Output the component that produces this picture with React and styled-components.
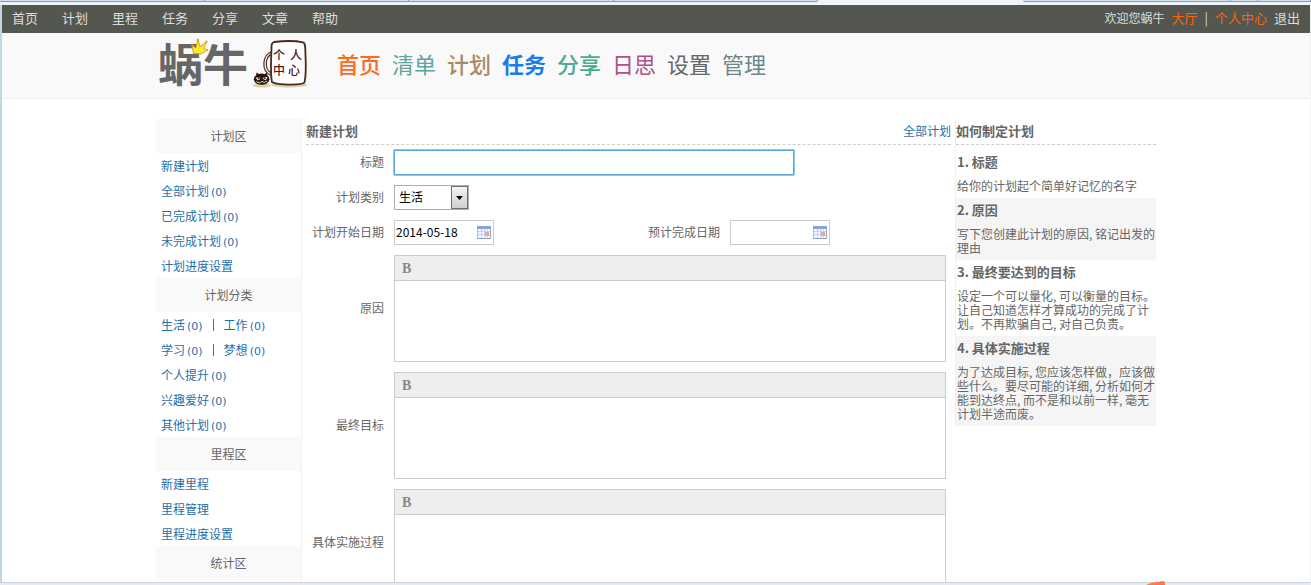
import styled, {createGlobalStyle} from "styled-components";

const GlobalStyle = createGlobalStyle`
    *, *::before, *::after {
        box-sizing: border-box;
    }

    body {
        margin: 0;
        overflow: hidden;
        color: #666;
        font: 12px/14px "Noto Sans CJK SC", sans-serif;
    }

    ul, ol, h2, h3, p {
        margin: 0;
        padding: 0;
        list-style: none;
        font-weight: normal;
    }

    a {
        color: inherit;
        text-decoration: none;
    }

    button, input, select, textarea {
        margin: 0;
        font: inherit;
        border-radius: 0;
    }
`;

/* ---------- window frame ---------- */

const Window = styled.div`
    height: 100vh;
    display: flex;
    flex-direction: column;
    background: #edf3f8;
`;

const TabStrip = styled.div`
    flex: none;
    height: 5px;
    display: flex;
    justify-content: space-between;
`;

const TabGroup = styled.div`
    display: flex;
    height: 2px;
    width: ${props => props.$width};
    border-bottom: 1px solid #7f9fb8;
    border-radius: ${props => props.$radius};
    background: #d3e2ed;
`;

const Tab = styled.div`
    flex: ${props => props.$grow || 1};
    border-right: 1px solid #7f9fb8;
`;

const Viewport = styled.div`
    flex: 1;
    min-height: 0;
    overflow: hidden;
    display: flex;
    flex-direction: column;
    margin: 0 1px 0 0;
    border-left: 2px solid #c3d5e0;
    background: #fff;
`;

const StatusEdge = styled.div`
    flex: none;
    position: relative;
    height: 3px;
    border-top: 1px solid #c8d2d9;
    background: #e6ebf3;
`;

const Ribbon = styled.svg`
    position: absolute;
    right: 145px;
    bottom: 0;
`;

/* ---------- top bar ---------- */

const TopBar = styled.div`
    flex: none;
    height: 28px;
    display: flex;
    align-items: center;
    justify-content: space-between;
    padding: 0 10px 2px;
    background: #545650;
    color: #ddd;
    font-size: 13px;
`;

const TopLinks = styled.nav`
    display: flex;
    gap: 24px;
`;

const UserLinks = styled.div`
    display: flex;
    align-items: center;
    gap: 7px;
`;

const Welcome = styled.span`
    font-size: 12px;
`;

const HotLink = styled.a`
    color: #f60;
`;

/* ---------- header ---------- */

const Header = styled.header`
    flex: none;
    height: 66px;
    background: #f9f9f9;
    border-bottom: 1px solid #f3f3f3;
`;

const Container = styled.div`
    width: 100%;
    max-width: 1000px;
    margin: 0 auto;
`;

const HeaderInner = styled(Container)`
    height: 60px;
    display: flex;
    align-items: center;
`;

const Logo = styled.a`
    position: relative;
    width: 96px;
    padding-left: 2px;
    color: #666;
    font-size: 45px;
    font-weight: 700;
    line-height: 60px;
    white-space: nowrap;
`;

const Crown = styled.svg`
    position: absolute;
    left: 35px;
    top: 5px;
`;

const MainNav = styled.nav`
    display: flex;
    gap: 11px;
    margin-left: 29px;
    font-size: 22px;
    line-height: 32px;
`;

const NavLink = styled.a`
    color: ${props => props.$color};
    font-weight: ${props => props.$weight || 400};
`;

/* ---------- columns ---------- */

const Columns = styled(Container)`
    flex: 1;
    display: flex;
    align-items: stretch;
    padding-top: 20px;
`;

const Sidebar = styled.aside`
    flex: none;
    width: 146px;
    border-right: 1px solid #eeeef8;
`;

const SideTitle = styled.h2`
    font-size: 12px;
    line-height: 34px;
    text-align: center;
    background: #f9f9f9;
`;

const SideRow = styled.li`
    display: flex;
    align-items: center;
    height: 25px;
    padding-left: 5px;
    color: #1f6fa8;
`;

const Count = styled.span`
    font-family: "DejaVu Sans", sans-serif;
    font-size: 11px;
    line-height: 0;
    padding-left: 2px;
`;

const Divider = styled.span`
    width: 1px;
    height: 12px;
    margin: 0 10px;
    background: #666;
`;

const Main = styled.main`
    flex: 1;
    min-width: 0;
    padding: 0 4px;
`;

const SectionHead = styled.div`
    display: flex;
    justify-content: space-between;
    height: 26px;
    margin-bottom: 5px;
    border-bottom: 1px dashed #ccc;
    line-height: 24px;
`;

const SectionTitle = styled.h2`
    font-size: 13px;
    font-weight: 700;
`;

const BlueLink = styled.a`
    color: #1f6fa8;
`;

/* ---------- form ---------- */

const Form = styled.form`
    display: flex;
    flex-direction: column;
    gap: 10px;
    padding-right: 5px;
`;

const Row = styled.div`
    display: flex;
    align-items: center;
    gap: 10px;
`;

const DateRow = styled.div`
    display: grid;
    grid-template-columns: 336px 1fr;
`;

const Label = styled.label`
    flex: none;
    width: 78px;
    padding-bottom: 2px;
    text-align: right;
`;

const TitleInput = styled.input`
    width: 400px;
    height: 25px;
    padding: 0 4px;
    border: 1px solid #58a9d6;
    border-radius: 1px;
    box-shadow: 0 0 0 1px #86c9ee;
    outline: none;
`;

const SelectBox = styled.div`
    position: relative;
    width: 75px;
    height: 25px;
`;

const Select = styled.select`
    appearance: none;
    width: 100%;
    height: 100%;
    padding: 0 20px 2px 4px;
    border: 1px solid #abadb3;
    background: #fff;
    color: #000;
`;

const SelectArrow = styled.span`
    position: absolute;
    top: 1px;
    right: 1px;
    bottom: 1px;
    width: 17px;
    display: flex;
    align-items: center;
    justify-content: center;
    border: 1px solid #707070;
    background: linear-gradient(#f4f4f4, #cfcfcf);
    pointer-events: none;
`;

const DateBox = styled.div`
    width: 100px;
    height: 25px;
    display: flex;
    align-items: center;
    padding: 0 0 0 1px;
    border: 1px solid #ccc;
`;

const DateInput = styled.input`
    flex: 1;
    min-width: 0;
    padding: 0 0 2px;
    border: 0;
    outline: none;
    background: none;
    color: #000;
`;

const Editor = styled.div`
    flex: 1;
    min-width: 0;
    height: 107px;
    display: flex;
    flex-direction: column;
    border: 1px solid #ccc;
`;

const EditorBar = styled.div`
    display: flex;
    align-items: center;
    height: 25px;
    padding-left: 7px;
    border-bottom: 1px solid #ccc;
    background: #eee;
`;

const BoldButton = styled.button`
    padding: 1px 0 0;
    border: 0;
    background: none;
    color: #888;
    font: bold 14px/16px "Liberation Serif", serif;
`;

const EditorText = styled.textarea`
    flex: 1;
    padding: 4px;
    border: 0;
    outline: none;
    resize: none;
`;

/* ---------- help ---------- */

const Help = styled.aside`
    flex: none;
    align-self: flex-start;
    width: 201px;
    border-left: 1px solid #eeeef8;
`;

const HelpItem = styled.li`
    padding-left: 1px;

    &:nth-child(even) {
        background: #f5f5f5;
    }
`;

const HelpTitle = styled.h3`
    font-size: 13px;
    font-weight: 700;
    line-height: 24px;
`;

const HelpText = styled.p`
    padding: 5px 0;
`;

const topLinks = ["首页", "计划", "里程", "任务", "分享", "文章", "帮助"];

const navLinks = [
    {text: "首页", color: "#ff6a22", weight: 500},
    {text: "清单", color: "#5fa3a3"},
    {text: "计划", color: "#a88a66", weight: 500},
    {text: "任务", color: "#1a7af0", weight: 700},
    {text: "分享", color: "#4aab94", weight: 500},
    {text: "日思", color: "#b0508c"},
    {text: "设置", color: "#666"},
    {text: "管理", color: "#6c868c"},
];

const sections = [
    {
        title: "计划区",
        rows: [
            [{text: "新建计划"}],
            [{text: "全部计划", count: 0}],
            [{text: "已完成计划", count: 0}],
            [{text: "未完成计划", count: 0}],
            [{text: "计划进度设置"}],
        ],
    },
    {
        title: "计划分类",
        rows: [
            [{text: "生活", count: 0}, {text: "工作", count: 0}],
            [{text: "学习", count: 0}, {text: "梦想", count: 0}],
            [{text: "个人提升", count: 0}],
            [{text: "兴趣爱好", count: 0}],
            [{text: "其他计划", count: 0}],
        ],
    },
    {
        title: "里程区",
        rows: [[{text: "新建里程"}], [{text: "里程管理"}], [{text: "里程进度设置"}]],
    },
    {title: "统计区", rows: []},
];

const editors = [
    {id: "reason", label: "原因"},
    {id: "goal", label: "最终目标"},
    {id: "process", label: "具体实施过程"},
];

const helpItems = [
    {title: "标题", text: "给你的计划起个简单好记忆的名字"},
    {title: "原因", text: "写下您创建此计划的原因, 铭记出发的理由"},
    {title: "最终要达到的目标", text: "设定一个可以量化, 可以衡量的目标。让自己知道怎样才算成功的完成了计划。不再欺骗自己, 对自己负责。"},
    {title: "具体实施过程", text: "为了达成目标, 您应该怎样做，应该做些什么。要尽可能的详细, 分析如何才能到达终点, 而不是和以前一样, 毫无计划半途而废。"},
];

const CrownIcon = () => (
    <Crown width="18" height="18" viewBox="0 0 18 18" aria-hidden="true">
        <path d="M3.5 16.5 L.8 8.2 L5 10.6 L5.8 1.6 L9 8.8 L14.8 2.6 L12.8 9.8 L16.6 11.2 L11 15.6 Z"
              transform="rotate(8 9 9)" fill="#ffe92a" stroke="#c99a10" strokeWidth=".8" strokeLinejoin="round"/>
        <g fill="#e8a020">
            <circle cx="6.8" cy="2" r="1.2"/>
            <circle cx="15.4" cy="3.6" r="1.1"/>
            <circle cx="1.3" cy="7.4" r="1"/>
            <circle cx="16.3" cy="12" r="1"/>
        </g>
    </Crown>
);

const CupIcon = () => (
    <svg width="56" height="54" viewBox="0 -4 56 54" role="img" aria-label="个人中心">
        <ellipse cx="10" cy="45.4" rx="9" ry="2.2" fill="#d9d2b0"/>
        <ellipse cx="37" cy="45" rx="18" ry="2.4" fill="#d9d2b0"/>
        <path d="M20 13 C12 15 10 30 19 34" fill="none" stroke="#4a2a1c" strokeWidth="3.6"/>
        <path d="M20 13 C12 15 10 30 19 34" fill="none" stroke="#fff" strokeWidth="1.2"/>
        <path d="M22 2 C32 .8 44 .8 51 2.4 C54 3.4 53 8 53.5 15 C54 26 54 36 52.5 42.4 C51 45.4 25 45.4 20 42 C18 34 19.5 14 19.5 6 C19.6 3.4 20 2.6 22 2 Z"
              fill="#fff" stroke="#4a2a1c" strokeWidth="1.8"/>
        <ellipse cx="9.6" cy="39.2" rx="7.8" ry="5.6" fill="#24150f"/>
        <path d="M4 36 L4.6 32.6 L7.6 34.6 Z M12 34.4 L14.8 32.8 L15.8 36 Z" fill="#24150f"/>
        <path d="M3.6 37.4 L8.4 37.8 Q7.6 40.8 5.4 40.2 Z M10.4 38 L15.4 36.8 Q15 40.4 12.4 40 Z" fill="#eee0b4"/>
        <path d="M4.4 41.6 Q8 44.4 10 41.4 Q12 43.8 15 41" fill="none" stroke="#eee0b4" strokeWidth="1"/>
        <circle cx="6.8" cy="38.6" r=".8" fill="#24150f"/>
        <circle cx="12.8" cy="38.4" r=".8" fill="#24150f"/>
        <g fill="#4f1414" fontFamily="Noto Sans CJK SC, sans-serif" fontSize="12" fontWeight="500">
            <text x="21" y="20">个</text>
            <text x="38" y="20">人</text>
            <text x="21" y="35">中</text>
            <text x="36" y="35">心</text>
        </g>
    </svg>
);

const CalendarIcon = () => (
    <svg width="16" height="15" viewBox="0 0 16 15" aria-hidden="true">
        <rect x=".5" y="1.5" width="13" height="12" fill="#f4f8fe" stroke="#a9bfe0"/>
        <rect x="0" y="1" width="14" height="3" fill="#86a5d8"/>
        <path d="M1 6.5H13M1 9.5H13M4.5 4V13M7.5 4V13M10.5 4V13" stroke="#c3d3ea"/>
        <rect x="8" y="7" width="4" height="4" fill="#f0a48c"/>
        <path d="M0 13.5H13.5V5" fill="none" stroke="#8ea6cc"/>
    </svg>
);

const DateField = ({id, label, value}) => (
    <Row>
        <Label htmlFor={id}>{label}</Label>
        <DateBox>
            <DateInput id={id} type="text" defaultValue={value}/>
            <CalendarIcon/>
        </DateBox>
    </Row>
);

const SideEntry = ({text, count}) => (
    <a href="#">
        {text}
        {count !== undefined && <Count>({count})</Count>}
    </a>
);

const App = () => {
    return (
        <Window>
            <GlobalStyle/>

            <TabStrip>
                <TabGroup $width="62.4%" $radius="0 0 3px 0">
                    {[...Array(4)].map((_, i) => <Tab key={i}/>)}
                </TabGroup>
                <TabGroup $width="22%" $radius="0 0 0 3px">
                    <Tab $grow={8}/>
                    <Tab/>
                    <Tab $grow={2}/>
                </TabGroup>
            </TabStrip>

            <Viewport>
                <TopBar>
                    <TopLinks>
                        {topLinks.map(text => <a key={text} href="#">{text}</a>)}
                    </TopLinks>
                    <UserLinks>
                        <Welcome>欢迎您蜗牛</Welcome>
                        <HotLink href="#">大厅</HotLink>
                        <span>|</span>
                        <HotLink href="#">个人中心</HotLink>
                        <a href="#">退出</a>
                    </UserLinks>
                </TopBar>

                <Header>
                    <HeaderInner>
                        <Logo href="#">
                            蜗牛
                            <CrownIcon/>
                        </Logo>
                        <CupIcon/>
                        <MainNav>
                            {navLinks.map(({text, color, weight}) => (
                                <NavLink key={text} href="#" $color={color} $weight={weight}>{text}</NavLink>
                            ))}
                        </MainNav>
                    </HeaderInner>
                </Header>

                <Columns>
                    <Sidebar>
                        {sections.map(({title, rows}) => (
                            <section key={title}>
                                <SideTitle>{title}</SideTitle>
                                <ul>
                                    {rows.map(([first, second]) => (
                                        <SideRow key={first.text}>
                                            <SideEntry {...first}/>
                                            {second && <Divider/>}
                                            {second && <SideEntry {...second}/>}
                                        </SideRow>
                                    ))}
                                </ul>
                            </section>
                        ))}
                    </Sidebar>

                    <Main>
                        <SectionHead>
                            <SectionTitle>新建计划</SectionTitle>
                            <BlueLink href="#">全部计划</BlueLink>
                        </SectionHead>

                        <Form>
                            <Row>
                                <Label htmlFor="title">标题</Label>
                                <TitleInput id="title" type="text"/>
                            </Row>
                            <Row>
                                <Label htmlFor="category">计划类别</Label>
                                <SelectBox>
                                    <Select id="category" defaultValue="生活">
                                        <option>生活</option>
                                        <option>工作</option>
                                        <option>学习</option>
                                        <option>梦想</option>
                                    </Select>
                                    <SelectArrow>
                                        <svg width="7" height="4" viewBox="0 0 7 4" aria-hidden="true">
                                            <path d="M0 0H7L3.5 4Z" fill="#000"/>
                                        </svg>
                                    </SelectArrow>
                                </SelectBox>
                            </Row>
                            <DateRow>
                                <DateField id="start" label="计划开始日期" value="2014-05-18"/>
                                <DateField id="end" label="预计完成日期" value=""/>
                            </DateRow>
                            {editors.map(({id, label}) => (
                                <Row key={id}>
                                    <Label htmlFor={id}>{label}</Label>
                                    <Editor>
                                        <EditorBar>
                                            <BoldButton type="button">B</BoldButton>
                                        </EditorBar>
                                        <EditorText id={id}/>
                                    </Editor>
                                </Row>
                            ))}
                        </Form>
                    </Main>

                    <Help>
                        <SectionHead>
                            <SectionTitle>如何制定计划</SectionTitle>
                        </SectionHead>
                        <ol>
                            {helpItems.map(({title, text}, i) => (
                                <HelpItem key={title}>
                                    <HelpTitle>{i + 1}. {title}</HelpTitle>
                                    <HelpText>{text}</HelpText>
                                </HelpItem>
                            ))}
                        </ol>
                    </Help>
                </Columns>
            </Viewport>

            <StatusEdge>
                <Ribbon width="20" height="4" viewBox="0 0 20 4" aria-hidden="true">
                    <path d="M0 4L5 2L17 0L19 1V4Z" fill="#ff7a45"/>
                </Ribbon>
            </StatusEdge>
        </Window>
    );
};

export default App;
